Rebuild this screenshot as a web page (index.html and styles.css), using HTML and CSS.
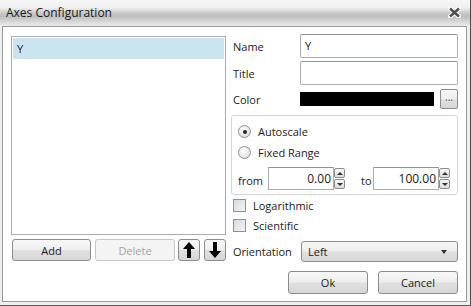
FILE: index.html
```html
<!DOCTYPE html>
<html lang="en">
<head>
    <meta charset="UTF-8">
    <title>Axes Configuration</title>
    <link rel="stylesheet" href="styles.css">
</head>
<body>

    <div class="window">
        <div class="titlebar">
            <span class="title">Axes Configuration</span>
            <svg class="close" width="13" height="11" viewBox="0 0 13 11">
                <path d="M2 1.5 L11 9.5 M11 1.5 L2 9.5" stroke="#ffffff" stroke-width="4.5" stroke-linecap="round"/>
                <path d="M2 1.5 L11 9.5 M11 1.5 L2 9.5" stroke="#4e4e4e" stroke-width="2.4"/>
            </svg>
        </div>

        <div class="client">
            <div class="left-pane">
                <div class="listbox">
                    <div class="list-item selected">Y</div>
                </div>
                <div class="list-buttons">
                    <div class="btn btn-add">Add</div>
                    <div class="btn btn-delete disabled">Delete</div>
                    <div class="btn btn-arrow btn-up">
                        <svg width="12" height="16" viewBox="0 0 12 16"><path d="M6 0 L12 7 L8 7 L8 16 L4 16 L4 7 L0 7 Z" fill="#000"/></svg>
                    </div>
                    <div class="btn btn-arrow btn-down">
                        <svg width="12" height="16" viewBox="0 0 12 16"><path d="M6 16 L12 9 L8 9 L8 0 L4 0 L4 9 L0 9 Z" fill="#000"/></svg>
                    </div>
                </div>
            </div>

            <div class="right-pane">
                <div class="field-row">
                    <span class="field-label">Name</span>
                    <div class="textbox">Y</div>
                </div>
                <div class="field-row row-title">
                    <span class="field-label">Title</span>
                    <div class="textbox"></div>
                </div>
                <div class="field-row row-color">
                    <span class="field-label">Color</span>
                    <div class="color-swatch"></div>
                    <div class="btn btn-dots">...</div>
                </div>

                <div class="range-group">
                    <div class="radio-row">
                        <span class="radio checked"></span>
                        <span>Autoscale</span>
                    </div>
                    <div class="radio-row">
                        <span class="radio"></span>
                        <span>Fixed Range</span>
                    </div>
                    <div class="range-row">
                        <span class="range-label from">from</span>
                        <div class="numbox">0.00</div>
                        <div class="spinner"><span class="spin up"></span><span class="spin down"></span></div>
                        <span class="range-label to">to</span>
                        <div class="numbox">100.00</div>
                        <div class="spinner"><span class="spin up"></span><span class="spin down"></span></div>
                    </div>
                </div>

                <div class="check-row">
                    <span class="checkbox"></span>
                    <span>Logarithmic</span>
                </div>
                <div class="check-row">
                    <span class="checkbox"></span>
                    <span>Scientific</span>
                </div>

                <div class="field-row row-orientation">
                    <span class="field-label">Orientation</span>
                    <div class="combo">
                        <span>Left</span>
                        <span class="combo-arrow"></span>
                    </div>
                </div>

                <div class="dialog-buttons">
                    <div class="btn btn-dialog">Ok</div>
                    <div class="btn btn-dialog">Cancel</div>
                </div>
            </div>
        </div>
    </div>

</body>
</html>
```

FILE: styles.css
```css
body {
    margin: 0;
    font-family: "Open Sans", "Noto Sans", sans-serif;
    font-size: 11px;
    color: #1b1b1b;
    background: #ffffff;
}

.window {
    width: 471px;
    height: 306px;
    box-sizing: border-box;
    display: flex;
    flex-direction: column;
    background: #efefef;
    border-right: 1px solid #4a4a4a;
    border-bottom: 1px solid #5a5a5a;
}

.titlebar {
    flex: none;
    height: 26px;
    display: flex;
    align-items: center;
    justify-content: space-between;
    padding: 0 9px 0 6px;
    background: linear-gradient(#f6f6f6 0%, #efefef 30%, #c9c9c9 50%, #bdbdbd 62%, #d9d9d9 85%, #ececec 100%);
    font-size: 12px;
    color: #1a1a1a;
}

.title {
    margin-top: -1px;
}

.close {
    margin-top: -2px;
}

/* white dialog area */
.client {
    flex: 1;
    display: flex;
    gap: 5px;
    margin: 0 3px 3px 2px;
    padding: 7px 8px 0 8px;
    border: 1px solid #9a9a9a;
    background: #ffffff;
}

.left-pane {
    width: 215px;
    flex: none;
    padding-top: 2px;
}

.listbox {
    height: 199px;
    box-sizing: border-box;
    border: 1px solid #a9adb3;
    padding: 1px 1px;
}

.list-item {
    height: 21px;
    line-height: 21px;
    padding-left: 4px;
}

.list-item.selected {
    background: #cbe5f0;
}

.list-buttons {
    display: flex;
    margin-top: 4px;
    height: 22px;
}

.btn {
    box-sizing: border-box;
    display: flex;
    align-items: center;
    justify-content: center;
    border: 1px solid #8c8c8c;
    border-radius: 3px;
    background: linear-gradient(#f7f7f7 0%, #eeeeee 48%, #e0e0e0 52%, #d7d7d7 100%);
    color: #1b1b1b;
}

.btn.disabled {
    border-color: #c4c6c8;
    background: #f4f4f4;
    color: #a3a3a3;
}

.btn-add {
    width: 79px;
    margin-left: 1px;
}

.btn-delete {
    width: 80px;
    margin-left: 4px;
}

.btn-arrow {
    width: 22px;
}

.btn-up {
    margin-left: 3px;
}

.btn-down {
    margin-left: 4px;
}

.right-pane {
    width: 227px;
    flex: none;
    display: flex;
    flex-direction: column;
}

.field-row {
    display: flex;
    align-items: center;
    height: 24px;
    padding-left: 2px;
}

.field-label {
    width: 67px;
    flex: none;
}

.row-title {
    margin-top: 3px;
}

.row-color {
    margin-top: 4px;
    height: 20px;
}

.textbox {
    box-sizing: border-box;
    width: 158px;
    height: 24px;
    line-height: 22px;
    padding-left: 4px;
    border: 1px solid #abadb3;
    border-top-color: #8f949b;
    border-radius: 2px;
}

.color-swatch {
    width: 134px;
    height: 14px;
    background: #000000;
}

.btn-dots {
    width: 18px;
    height: 20px;
    margin-left: 6px;
    font-size: 10px;
    color: #2b4c8a;
    padding-bottom: 4px;
    border-radius: 2px;
}

/* autoscale / fixed range box */
.range-group {
    box-sizing: border-box;
    height: 80px;
    margin-top: 6px;
    padding: 5px 1px 0 6px;
    border: 1px solid #d2d6da;
    border-radius: 3px;
}

.radio-row {
    display: flex;
    align-items: center;
    height: 21px;
    gap: 7px;
}

.radio {
    box-sizing: border-box;
    width: 13px;
    height: 13px;
    border-radius: 50%;
    border: 1px solid #8e9297;
    background: radial-gradient(circle at 40% 35%, #ffffff 0%, #e6e6e6 60%, #cfd3d6 100%);
    display: flex;
    align-items: center;
    justify-content: center;
}

.radio.checked::after {
    content: "";
    width: 4px;
    height: 4px;
    border-radius: 50%;
    background: #1d2a3a;
}

.range-row {
    display: flex;
    align-items: center;
    margin-top: 4px;
    height: 23px;
}

.range-label {
    align-self: flex-end;
    line-height: 18px;
}

.range-label.from {
    width: 30px;
}

.range-label.to {
    width: 12px;
    margin-left: 16px;
}

.numbox {
    box-sizing: border-box;
    width: 66px;
    height: 23px;
    line-height: 21px;
    text-align: right;
    padding-right: 2px;
    border: 1px solid #abadb3;
    border-top-color: #8f949b;
    font-size: 12px;
}

.spinner {
    width: 11px;
    height: 21px;
    display: flex;
    flex-direction: column;
    gap: 1px;
}

.spin {
    flex: 1;
    box-sizing: border-box;
    border: 1px solid #8c8c8c;
    border-radius: 2px;
    background: linear-gradient(#f7f7f7, #dcdcdc);
    display: flex;
    align-items: center;
    justify-content: center;
}

.spin.up::after {
    content: "";
    border-left: 3px solid transparent;
    border-right: 3px solid transparent;
    border-bottom: 3px solid #333333;
}

.spin.down::after {
    content: "";
    border-left: 3px solid transparent;
    border-right: 3px solid transparent;
    border-top: 3px solid #333333;
}

.check-row {
    display: flex;
    align-items: center;
    gap: 7px;
    height: 20px;
    padding-left: 2px;
}

.checkbox {
    box-sizing: border-box;
    width: 13px;
    height: 13px;
    border: 1px solid #8e9297;
    background: linear-gradient(135deg, #d7dadd, #f4f4f4);
}

.row-orientation {
    margin-top: 6px;
    height: 21px;
}

.row-orientation .field-label {
    width: 68px;
}

.combo {
    box-sizing: border-box;
    width: 157px;
    height: 21px;
    display: flex;
    align-items: center;
    justify-content: space-between;
    padding: 0 10px 0 6px;
    border: 1px solid #8c8c8c;
    border-radius: 3px;
    background: linear-gradient(#f7f7f7 0%, #eeeeee 48%, #e0e0e0 52%, #d7d7d7 100%);
}

.combo-arrow {
    border-left: 3px solid transparent;
    border-right: 3px solid transparent;
    border-top: 4px solid #333333;
}

.dialog-buttons {
    display: flex;
    justify-content: flex-end;
    gap: 10px;
    margin-top: 9px;
    height: 23px;
}

.btn-dialog {
    width: 80px;
}
```
